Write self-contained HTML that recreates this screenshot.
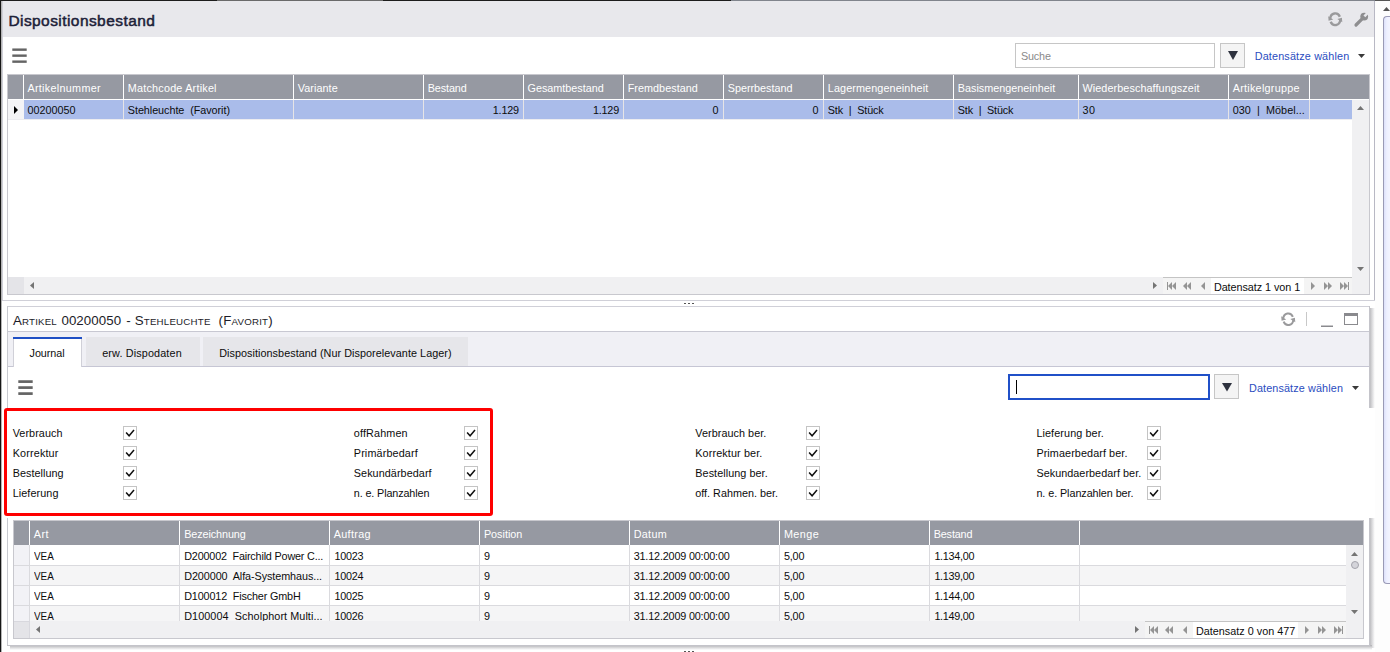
<!DOCTYPE html>
<html lang="de">
<head>
<meta charset="utf-8">
<title>Dispositionsbestand</title>
<style>
html,body{margin:0;padding:0;background:#fff;}
body{width:1390px;height:652px;position:relative;overflow:hidden;font-family:"Liberation Sans",sans-serif;font-size:10.8px;letter-spacing:0px;color:#0c0c0c;}
.a{position:absolute;}
.t{position:absolute;white-space:pre;line-height:14px;height:14px;}
svg{position:absolute;overflow:visible;}
</style>
</head>
<body>
<div class="a" style="left:0px;top:0px;width:1px;height:652px;background:#161616;"></div>
<div class="a" style="left:1px;top:0px;width:1px;height:652px;background:#b4b4b4;"></div>
<div class="a" style="left:2px;top:0px;width:1px;height:301px;background:#d0d0d8;"></div>
<div class="a" style="left:3px;top:0px;width:1372px;height:37px;background:#e8e8ec;"></div>
<div class="a" style="left:0px;top:0px;width:217px;height:1px;background:#1c1c1c;"></div>
<div class="a" style="left:217px;top:0px;width:166px;height:1px;background:#6a6a6a;"></div>
<div class="a" style="left:383px;top:0px;width:348px;height:1px;background:#1c1c1c;"></div>
<div class="a" style="left:731px;top:0px;width:644px;height:1px;background:#80848c;"></div>
<div class="a" style="left:1375px;top:0px;width:15px;height:1px;background:#555;"></div>
<div class="t" style="left:8.4px;top:9.5px;font-size:15.5px;line-height:22px;height:22px;color:#1c2138;-webkit-text-stroke:0.5px #1c2138;letter-spacing:0.431px">Dispositionsbestand</div>
<div class="a" style="left:1374px;top:1px;width:1px;height:300px;background:#b8b8c4;"></div>
<div class="a" style="left:2px;top:300px;width:1373px;height:1px;background:#d0d0d8;"></div>
<svg style="left:1327.7px;top:12px" width="14.5" height="14.5" viewBox="0 0 14.5 14.5"><g fill="none" stroke="#9a9a9c" stroke-width="2.4"><path d="M2.17 6.74A5.1 5.8 0 0 1 11.87 4.76"/><path d="M12.33 7.76A5.1 5.8 0 0 1 2.63 9.74"/></g><path d="M0.2 4.2L5.2 7.6L0.6 8.8Z" fill="#9a9a9c"/><path d="M14.3 10.3L9.3 6.9L13.9 5.7Z" fill="#9a9a9c"/></svg>
<svg style="left:1354px;top:12px" width="14.5" height="15" viewBox="0 0 14.5 15"><path d="M2 13L8.6 6.4" stroke="#8e8e90" stroke-width="3.2" stroke-linecap="round" fill="none"/><circle cx="10.2" cy="4.6" r="3.9" fill="#8e8e90"/><path d="M10.4 4.4L14.4 0.2" stroke="#e8e8ec" stroke-width="2.6" fill="none"/></svg>
<svg style="left:12px;top:48px" width="15" height="15"><g fill="#646464"><rect x="0.3" y="0.45" width="14.4" height="2.4"/><rect x="0.3" y="6.45" width="14.4" height="2.4"/><rect x="0.3" y="12.45" width="14.4" height="2.4"/></g></svg>
<div class="a" style="left:1015px;top:43px;width:198px;height:23px;border:1px solid #c6c6c6;background:#fff"></div>
<div class="t" style="left:1021.0px;top:49px;letter-spacing:-0.181px;color:#8a8a8a">Suche</div>
<div class="a" style="left:1220px;top:43px;width:23px;height:23px;border:1px solid #c6c6c6;background:#f4f4f4"></div>
<svg style="left:1227.5px;top:51px" width="10" height="9"><path d="M0 0H10L5.0 9Z" fill="#2e323e"/></svg>
<div class="t" style="left:1254.7px;top:49px;letter-spacing:0.166px;color:#2a4cc0">Datensätze wählen</div>
<svg style="left:1358px;top:54px" width="7" height="4"><path d="M0 0H7L3.5 4Z" fill="#3a3a3a"/></svg>
<div class="a" style="left:7px;top:74px;width:1363px;height:221px;background:#c8c8ce;"></div>
<div class="a" style="left:8px;top:75px;width:1361px;height:219px;background:#fff;"></div>
<div class="a" style="left:8px;top:75px;width:1361px;height:24px;background:#9699a2;"></div>
<div class="a" style="left:23px;top:75px;width:1px;height:24px;background:#fff;"></div>
<div class="a" style="left:123px;top:75px;width:1px;height:24px;background:#fff;"></div>
<div class="a" style="left:293px;top:75px;width:1px;height:24px;background:#fff;"></div>
<div class="a" style="left:423px;top:75px;width:1px;height:24px;background:#fff;"></div>
<div class="a" style="left:523px;top:75px;width:1px;height:24px;background:#fff;"></div>
<div class="a" style="left:623px;top:75px;width:1px;height:24px;background:#fff;"></div>
<div class="a" style="left:723px;top:75px;width:1px;height:24px;background:#fff;"></div>
<div class="a" style="left:823px;top:75px;width:1px;height:24px;background:#fff;"></div>
<div class="a" style="left:953px;top:75px;width:1px;height:24px;background:#fff;"></div>
<div class="a" style="left:1078px;top:75px;width:1px;height:24px;background:#fff;"></div>
<div class="a" style="left:1228px;top:75px;width:1px;height:24px;background:#fff;"></div>
<div class="a" style="left:1309px;top:75px;width:1px;height:24px;background:#fff;"></div>
<div class="t" style="left:27.4px;top:81px;letter-spacing:0.299px;color:#fff">Artikelnummer</div>
<div class="t" style="left:127.8px;top:81px;letter-spacing:0.218px;color:#fff">Matchcode Artikel</div>
<div class="t" style="left:297.8px;top:81px;letter-spacing:0.068px;color:#fff">Variante</div>
<div class="t" style="left:427.7px;top:81px;letter-spacing:-0.104px;color:#fff">Bestand</div>
<div class="t" style="left:527.6px;top:81px;letter-spacing:-0.011px;color:#fff">Gesamtbestand</div>
<div class="t" style="left:627.7px;top:81px;letter-spacing:0.043px;color:#fff">Fremdbestand</div>
<div class="t" style="left:727.7px;top:81px;letter-spacing:-0.003px;color:#fff">Sperrbestand</div>
<div class="t" style="left:827.8px;top:81px;letter-spacing:0.115px;color:#fff">Lagermengeneinheit</div>
<div class="t" style="left:957.8px;top:81px;letter-spacing:0.009px;color:#fff">Basismengeneinheit</div>
<div class="t" style="left:1082.5px;top:81px;letter-spacing:0.088px;color:#fff">Wiederbeschaffungszeit</div>
<div class="t" style="left:1232.7px;top:81px;letter-spacing:0.265px;color:#fff">Artikelgruppe</div>
<div class="a" style="left:8px;top:100px;width:16px;height:19px;background:#f4f4f6;"></div>
<div class="a" style="left:24px;top:100px;width:1328px;height:19px;background:#aabcea;"></div>
<div class="a" style="left:123px;top:100px;width:1px;height:19px;background:#e6e4e6;"></div>
<div class="a" style="left:293px;top:100px;width:1px;height:19px;background:#e6e4e6;"></div>
<div class="a" style="left:423px;top:100px;width:1px;height:19px;background:#e6e4e6;"></div>
<div class="a" style="left:523px;top:100px;width:1px;height:19px;background:#e6e4e6;"></div>
<div class="a" style="left:623px;top:100px;width:1px;height:19px;background:#e6e4e6;"></div>
<div class="a" style="left:723px;top:100px;width:1px;height:19px;background:#e6e4e6;"></div>
<div class="a" style="left:823px;top:100px;width:1px;height:19px;background:#e6e4e6;"></div>
<div class="a" style="left:953px;top:100px;width:1px;height:19px;background:#e6e4e6;"></div>
<div class="a" style="left:1078px;top:100px;width:1px;height:19px;background:#e6e4e6;"></div>
<div class="a" style="left:1228px;top:100px;width:1px;height:19px;background:#e6e4e6;"></div>
<div class="a" style="left:1309px;top:100px;width:1px;height:19px;background:#e6e4e6;"></div>
<div class="a" style="left:8px;top:119px;width:1344px;height:1px;background:#ececf0;"></div>
<svg style="left:14px;top:106px" width="4" height="8"><path d="M0 0V8L4 4.0Z" fill="#000"/></svg>
<div class="t" style="left:27.4px;top:103px;letter-spacing:0.008px;">00200050</div>
<div class="t" style="left:127.8px;top:103px;letter-spacing:-0.049px;">Stehleuchte  (Favorit)</div>
<div class="t" style="left:492.8px;top:103px;letter-spacing:-0.183px;">1.129</div>
<div class="t" style="left:592.9px;top:103px;letter-spacing:-0.183px;">1.129</div>
<div class="t" style="left:712.4px;top:103px;letter-spacing:1.184px;">0</div>
<div class="t" style="left:812.4px;top:103px;letter-spacing:1.184px;">0</div>
<div class="t" style="left:827.8px;top:103px;letter-spacing:-0.126px;">Stk  |  Stück</div>
<div class="t" style="left:957.8px;top:103px;letter-spacing:-0.151px;">Stk  |  Stück</div>
<div class="t" style="left:1082.5px;top:103px;letter-spacing:0.484px;">30</div>
<div class="t" style="left:1232.7px;top:103px;letter-spacing:0.058px;">030  |  Möbel...</div>
<div class="a" style="left:1352px;top:100px;width:17px;height:177px;background:#f0f0f2;"></div>
<svg style="left:1357px;top:106px" width="7" height="4"><path d="M0 4H7L3.5 0Z" fill="#747474"/></svg>
<svg style="left:1357px;top:267px" width="7" height="4"><path d="M0 0H7L3.5 4Z" fill="#747474"/></svg>
<div class="a" style="left:8px;top:277px;width:1361px;height:17px;background:#f0f0f2;"></div>
<div class="a" style="left:8px;top:277px;width:16px;height:17px;background:#e4e4e8;"></div>
<svg style="left:30px;top:282px" width="4" height="7"><path d="M4 0V7L0 3.5Z" fill="#747474"/></svg>
<svg style="left:1153px;top:282px" width="4" height="7"><path d="M0 0V7L4 3.5Z" fill="#747474"/></svg>
<div class="a" style="left:1163px;top:277px;width:189px;height:17px;background:#f4f4f4;"></div>
<div class="a" style="left:1163px;top:277px;width:189px;height:1px;background:#c4c4c4;"></div>
<div class="a" style="left:1211px;top:278px;width:93px;height:16px;background:#fff;"></div>
<div class="t" style="left:1213.9px;top:280px;letter-spacing:-0.046px;">Datensatz 1 von 1</div>
<div class="a" style="left:1167px;top:282px;width:1px;height:8px;background:#949494;"></div>
<svg style="left:1168px;top:282px" width="4" height="8"><path d="M4 0V8L0 4.0Z" fill="#949494"/></svg>
<svg style="left:1172px;top:282px" width="4" height="8"><path d="M4 0V8L0 4.0Z" fill="#949494"/></svg>
<svg style="left:1183px;top:282px" width="4" height="8"><path d="M4 0V8L0 4.0Z" fill="#949494"/></svg>
<svg style="left:1187px;top:282px" width="4" height="8"><path d="M4 0V8L0 4.0Z" fill="#949494"/></svg>
<svg style="left:1201px;top:282px" width="4" height="8"><path d="M4 0V8L0 4.0Z" fill="#949494"/></svg>
<svg style="left:1311px;top:282px" width="4" height="8"><path d="M0 0V8L4 4.0Z" fill="#949494"/></svg>
<svg style="left:1324px;top:282px" width="4" height="8"><path d="M0 0V8L4 4.0Z" fill="#949494"/></svg>
<svg style="left:1328px;top:282px" width="4" height="8"><path d="M0 0V8L4 4.0Z" fill="#949494"/></svg>
<svg style="left:1340px;top:282px" width="4" height="8"><path d="M0 0V8L4 4.0Z" fill="#949494"/></svg>
<svg style="left:1344px;top:282px" width="4" height="8"><path d="M0 0V8L4 4.0Z" fill="#949494"/></svg>
<div class="a" style="left:1348px;top:282px;width:1px;height:8px;background:#949494;"></div>
<div class="a" style="left:684px;top:303px;width:2px;height:1px;background:#555;"></div>
<div class="a" style="left:688px;top:303px;width:2px;height:1px;background:#555;"></div>
<div class="a" style="left:692px;top:303px;width:2px;height:1px;background:#555;"></div>
<div class="a" style="left:684px;top:651px;width:2px;height:1px;background:#555;"></div>
<div class="a" style="left:688px;top:651px;width:2px;height:1px;background:#555;"></div>
<div class="a" style="left:692px;top:651px;width:2px;height:1px;background:#555;"></div>
<div class="a" style="left:1369px;top:308px;width:6px;height:100px;background:linear-gradient(to right,#b0b0b4,#dcdcde 55%,#fff)"></div>
<div class="a" style="left:1369px;top:518px;width:6px;height:130px;background:linear-gradient(to right,#b0b0b4,#dcdcde 55%,#fff)"></div>
<div class="a" style="left:10px;top:645px;width:1362px;height:5px;background:linear-gradient(to bottom,#b0b0b4,#dcdcde 55%,#fff)"></div>
<div class="a" style="left:7px;top:306px;width:1363px;height:1px;background:#d0d0d8;"></div>
<div class="a" style="left:7px;top:306px;width:1px;height:102px;background:#c8cad0;"></div>
<div class="a" style="left:7px;top:518px;width:1px;height:128px;background:#c8cad0;"></div>
<div class="a" style="left:1369px;top:306px;width:1px;height:102px;background:#c4c4ca;"></div>
<div class="a" style="left:1369px;top:518px;width:1px;height:128px;background:#c4c4ca;"></div>
<div class="a" style="left:7px;top:645px;width:1363px;height:1px;background:#c4c4ca;"></div>
<div class="a" style="left:8px;top:307px;width:1361px;height:24px;background:#fff;"></div>
<div class="t" style="left:13.0px;top:312px;line-height:18px;height:18px;color:#1c1c28;letter-spacing:0.179px"><span style="font-size:13.3px">A</span><span style="font-size:9.7px">RTIKEL</span></div>
<div class="t" style="left:61.4px;top:312px;line-height:18px;height:18px;color:#1c1c28;letter-spacing:0.09px"><span style="font-size:13.3px">00200050</span></div>
<div class="t" style="left:126.3px;top:312px;line-height:18px;height:18px;color:#1c1c28;letter-spacing:0.162px"><span style="font-size:13.3px">-</span></div>
<div class="t" style="left:134.7px;top:312px;line-height:18px;height:18px;color:#1c1c28;letter-spacing:0.223px"><span style="font-size:13.3px">S</span><span style="font-size:9.7px">TEHLEUCHTE</span></div>
<div class="t" style="left:218.5px;top:312px;line-height:18px;height:18px;color:#1c1c28;letter-spacing:0.232px"><span style="font-size:13.3px">(F</span><span style="font-size:9.7px">AVORIT</span><span style="font-size:13.3px">)</span></div>
<div class="a" style="left:8px;top:331px;width:1361px;height:1px;background:#c8c8d2;"></div>
<svg style="left:1281px;top:311.8px" width="14.5" height="14.5" viewBox="0 0 14.5 14.5"><g fill="none" stroke="#9a9a9c" stroke-width="2.0"><path d="M2.17 6.74A5.1 5.8 0 0 1 11.87 4.76"/><path d="M12.33 7.76A5.1 5.8 0 0 1 2.63 9.74"/></g><path d="M0.2 4.2L5.2 7.6L0.6 8.8Z" fill="#9a9a9c"/><path d="M14.3 10.3L9.3 6.9L13.9 5.7Z" fill="#9a9a9c"/></svg>
<div class="a" style="left:1306px;top:312px;width:1px;height:14px;background:#c8c8c8;"></div>
<div class="a" style="left:1321px;top:325px;width:12px;height:1px;background:#c6c6c8;"></div>
<div class="a" style="left:1321px;top:326px;width:12px;height:1px;background:#8a8a8e;"></div>
<div class="a" style="left:1344px;top:313px;width:12px;height:8px;border:1px solid #8a8a8e;border-top-width:3px;background:#fff"></div>
<div class="a" style="left:8px;top:332px;width:1361px;height:34px;background:#f0f0f5;"></div>
<div class="a" style="left:8px;top:366px;width:1361px;height:1px;background:#c6c6d4;"></div>
<div class="a" style="left:86px;top:337px;width:114px;height:29px;background:#e6e6ea;"></div>
<div class="a" style="left:203px;top:337px;width:265px;height:29px;background:#e6e6ea;"></div>
<div class="a" style="left:13px;top:337px;width:69px;height:30px;background:#d0d0d8;"></div>
<div class="a" style="left:14px;top:339px;width:67px;height:28px;background:#fff;"></div>
<div class="a" style="left:13px;top:337px;width:69px;height:2px;background:#1f4fc4;"></div>
<div class="t" style="left:29.6px;top:346px;letter-spacing:-0.07px;">Journal</div>
<div class="t" style="left:102.2px;top:346px;letter-spacing:0.147px;">erw. Dispodaten</div>
<div class="t" style="left:219.2px;top:346px;letter-spacing:0.056px;">Dispositionsbestand (Nur Disporelevante Lager)</div>
<svg style="left:18.1px;top:380px" width="15" height="15"><g fill="#646464"><rect x="0.3" y="0.25" width="14.4" height="2.7"/><rect x="0.3" y="6.25" width="14.4" height="2.7"/><rect x="0.3" y="12.25" width="14.4" height="2.7"/></g></svg>
<div class="a" style="left:1008px;top:374px;width:198px;height:22px;border:2px solid #2050c8;background:#fff"></div>
<div class="a" style="left:1016px;top:380px;width:1px;height:14px;background:#000;"></div>
<div class="a" style="left:1214px;top:374px;width:23px;height:23px;border:1px solid #c6c6c6;background:#f4f4f4"></div>
<svg style="left:1221.5px;top:383px" width="10" height="8.5"><path d="M0 0H10L5.0 8.5Z" fill="#2e323e"/></svg>
<div class="t" style="left:1249.0px;top:381px;letter-spacing:0.129px;color:#2a4cc0">Datensätze wählen</div>
<svg style="left:1352px;top:386px" width="7" height="4"><path d="M0 0H7L3.5 4Z" fill="#3a3a3a"/></svg>
<div class="t" style="left:12.7px;top:426px;letter-spacing:0.073px;">Verbrauch</div>
<div class="a" style="left:123px;top:426px;width:12px;height:12px;border:1px solid #c4c4c4;background:#fff"></div>
<svg style="left:123px;top:426px" width="14" height="14"><path d="M3.1 6.5L6.1 9.8L11 4" fill="none" stroke="#111" stroke-width="1.5"/></svg>
<div class="t" style="left:12.7px;top:446px;letter-spacing:0.162px;">Korrektur</div>
<div class="a" style="left:123px;top:446px;width:12px;height:12px;border:1px solid #c4c4c4;background:#fff"></div>
<svg style="left:123px;top:446px" width="14" height="14"><path d="M3.1 6.5L6.1 9.8L11 4" fill="none" stroke="#111" stroke-width="1.5"/></svg>
<div class="t" style="left:12.7px;top:466px;letter-spacing:0.053px;">Bestellung</div>
<div class="a" style="left:123px;top:466px;width:12px;height:12px;border:1px solid #c4c4c4;background:#fff"></div>
<svg style="left:123px;top:466px" width="14" height="14"><path d="M3.1 6.5L6.1 9.8L11 4" fill="none" stroke="#111" stroke-width="1.5"/></svg>
<div class="t" style="left:12.7px;top:486px;letter-spacing:0.084px;">Lieferung</div>
<div class="a" style="left:123px;top:486px;width:12px;height:12px;border:1px solid #c4c4c4;background:#fff"></div>
<svg style="left:123px;top:486px" width="14" height="14"><path d="M3.1 6.5L6.1 9.8L11 4" fill="none" stroke="#111" stroke-width="1.5"/></svg>
<div class="t" style="left:353.8px;top:426px;letter-spacing:0.147px;">offRahmen</div>
<div class="a" style="left:464px;top:426px;width:12px;height:12px;border:1px solid #c4c4c4;background:#fff"></div>
<svg style="left:464px;top:426px" width="14" height="14"><path d="M3.1 6.5L6.1 9.8L11 4" fill="none" stroke="#111" stroke-width="1.5"/></svg>
<div class="t" style="left:353.8px;top:446px;letter-spacing:0.136px;">Primärbedarf</div>
<div class="a" style="left:464px;top:446px;width:12px;height:12px;border:1px solid #c4c4c4;background:#fff"></div>
<svg style="left:464px;top:446px" width="14" height="14"><path d="M3.1 6.5L6.1 9.8L11 4" fill="none" stroke="#111" stroke-width="1.5"/></svg>
<div class="t" style="left:353.8px;top:466px;letter-spacing:0.074px;">Sekundärbedarf</div>
<div class="a" style="left:464px;top:466px;width:12px;height:12px;border:1px solid #c4c4c4;background:#fff"></div>
<svg style="left:464px;top:466px" width="14" height="14"><path d="M3.1 6.5L6.1 9.8L11 4" fill="none" stroke="#111" stroke-width="1.5"/></svg>
<div class="t" style="left:353.8px;top:486px;letter-spacing:-0.122px;">n. e. Planzahlen</div>
<div class="a" style="left:464px;top:486px;width:12px;height:12px;border:1px solid #c4c4c4;background:#fff"></div>
<svg style="left:464px;top:486px" width="14" height="14"><path d="M3.1 6.5L6.1 9.8L11 4" fill="none" stroke="#111" stroke-width="1.5"/></svg>
<div class="t" style="left:695.3px;top:426px;letter-spacing:0.059px;">Verbrauch ber.</div>
<div class="a" style="left:806px;top:426px;width:12px;height:12px;border:1px solid #c4c4c4;background:#fff"></div>
<svg style="left:806px;top:426px" width="14" height="14"><path d="M3.1 6.5L6.1 9.8L11 4" fill="none" stroke="#111" stroke-width="1.5"/></svg>
<div class="t" style="left:695.3px;top:446px;letter-spacing:0.121px;">Korrektur ber.</div>
<div class="a" style="left:806px;top:446px;width:12px;height:12px;border:1px solid #c4c4c4;background:#fff"></div>
<svg style="left:806px;top:446px" width="14" height="14"><path d="M3.1 6.5L6.1 9.8L11 4" fill="none" stroke="#111" stroke-width="1.5"/></svg>
<div class="t" style="left:695.3px;top:466px;letter-spacing:0.069px;">Bestellung ber.</div>
<div class="a" style="left:806px;top:466px;width:12px;height:12px;border:1px solid #c4c4c4;background:#fff"></div>
<svg style="left:806px;top:466px" width="14" height="14"><path d="M3.1 6.5L6.1 9.8L11 4" fill="none" stroke="#111" stroke-width="1.5"/></svg>
<div class="t" style="left:695.3px;top:486px;letter-spacing:-0.003px;">off. Rahmen. ber.</div>
<div class="a" style="left:806px;top:486px;width:12px;height:12px;border:1px solid #c4c4c4;background:#fff"></div>
<svg style="left:806px;top:486px" width="14" height="14"><path d="M3.1 6.5L6.1 9.8L11 4" fill="none" stroke="#111" stroke-width="1.5"/></svg>
<div class="t" style="left:1036.4px;top:426px;letter-spacing:0.105px;">Lieferung ber.</div>
<div class="a" style="left:1147px;top:426px;width:12px;height:12px;border:1px solid #c4c4c4;background:#fff"></div>
<svg style="left:1147px;top:426px" width="14" height="14"><path d="M3.1 6.5L6.1 9.8L11 4" fill="none" stroke="#111" stroke-width="1.5"/></svg>
<div class="t" style="left:1036.4px;top:446px;letter-spacing:0.093px;">Primaerbedarf ber.</div>
<div class="a" style="left:1147px;top:446px;width:12px;height:12px;border:1px solid #c4c4c4;background:#fff"></div>
<svg style="left:1147px;top:446px" width="14" height="14"><path d="M3.1 6.5L6.1 9.8L11 4" fill="none" stroke="#111" stroke-width="1.5"/></svg>
<div class="t" style="left:1036.4px;top:466px;letter-spacing:0.05px;">Sekundaerbedarf ber.</div>
<div class="a" style="left:1147px;top:466px;width:12px;height:12px;border:1px solid #c4c4c4;background:#fff"></div>
<svg style="left:1147px;top:466px" width="14" height="14"><path d="M3.1 6.5L6.1 9.8L11 4" fill="none" stroke="#111" stroke-width="1.5"/></svg>
<div class="t" style="left:1036.4px;top:486px;letter-spacing:-0.068px;">n. e. Planzahlen ber.</div>
<div class="a" style="left:1147px;top:486px;width:12px;height:12px;border:1px solid #c4c4c4;background:#fff"></div>
<svg style="left:1147px;top:486px" width="14" height="14"><path d="M3.1 6.5L6.1 9.8L11 4" fill="none" stroke="#111" stroke-width="1.5"/></svg>
<div class="a" style="left:4px;top:408px;width:483px;height:102px;border:3px solid #fe0000;border-radius:3px"></div>
<div class="a" style="left:13px;top:520px;width:1351px;height:119px;background:#c8c8ce;"></div>
<div class="a" style="left:14px;top:521px;width:1349px;height:117px;background:#fff;"></div>
<div class="a" style="left:14px;top:521px;width:1349px;height:24px;background:#9699a2;"></div>
<div class="a" style="left:29px;top:521px;width:1px;height:24px;background:#fff;"></div>
<div class="a" style="left:179px;top:521px;width:1px;height:24px;background:#fff;"></div>
<div class="a" style="left:329px;top:521px;width:1px;height:24px;background:#fff;"></div>
<div class="a" style="left:479px;top:521px;width:1px;height:24px;background:#fff;"></div>
<div class="a" style="left:629px;top:521px;width:1px;height:24px;background:#fff;"></div>
<div class="a" style="left:779px;top:521px;width:1px;height:24px;background:#fff;"></div>
<div class="a" style="left:929px;top:521px;width:1px;height:24px;background:#fff;"></div>
<div class="a" style="left:1079px;top:521px;width:1px;height:24px;background:#fff;"></div>
<div class="t" style="left:33.7px;top:527px;letter-spacing:0.502px;color:#fff">Art</div>
<div class="t" style="left:184.2px;top:527px;letter-spacing:-0.084px;color:#fff">Bezeichnung</div>
<div class="t" style="left:333.7px;top:527px;letter-spacing:0.331px;color:#fff">Auftrag</div>
<div class="t" style="left:483.9px;top:527px;letter-spacing:0.011px;color:#fff">Position</div>
<div class="t" style="left:633.7px;top:527px;letter-spacing:0.297px;color:#fff">Datum</div>
<div class="t" style="left:783.9px;top:527px;letter-spacing:0.446px;color:#fff">Menge</div>
<div class="t" style="left:933.7px;top:527px;letter-spacing:-0.137px;color:#fff">Bestand</div>
<div class="a" style="left:14px;top:545px;width:1332px;height:76px;overflow:hidden">
<div class="a" style="left:0;top:0px;width:1332px;height:20px;background:#fff"></div>
<div class="a" style="left:0;top:0px;width:15px;height:20px;background:#f2f2f6"></div>
<div class="a" style="left:0;top:20px;width:1332px;height:20px;background:#f5f5f6"></div>
<div class="a" style="left:0;top:20px;width:15px;height:20px;background:#f2f2f6"></div>
<div class="a" style="left:0;top:40px;width:1332px;height:20px;background:#fff"></div>
<div class="a" style="left:0;top:40px;width:15px;height:20px;background:#f2f2f6"></div>
<div class="a" style="left:0;top:60px;width:1332px;height:20px;background:#f5f5f6"></div>
<div class="a" style="left:0;top:60px;width:15px;height:20px;background:#f2f2f6"></div>
<div class="a" style="left:0;top:20px;width:1332px;height:1px;background:#dadade"></div>
<div class="t" style="left:20.0px;top:4px;letter-spacing:0;transform:scaleX(0.9163);transform-origin:0 50%;">VEA</div>
<div class="t" style="left:170.2px;top:4px;letter-spacing:-0.173px;">D200002  Fairchild Power C...</div>
<div class="t" style="left:320.4px;top:4px;letter-spacing:-0.233px;">10023</div>
<div class="t" style="left:469.9px;top:4px;letter-spacing:0.784px;">9</div>
<div class="t" style="left:619.7px;top:4px;letter-spacing:-0.165px;">31.12.2009 00:00:00</div>
<div class="t" style="left:769.9px;top:4px;letter-spacing:-0.172px;">5,00</div>
<div class="t" style="left:920.4px;top:4px;letter-spacing:-0.276px;">1.134,00</div>
<div class="a" style="left:0;top:40px;width:1332px;height:1px;background:#dadade"></div>
<div class="t" style="left:20.0px;top:24px;letter-spacing:0;transform:scaleX(0.9163);transform-origin:0 50%;">VEA</div>
<div class="t" style="left:170.2px;top:24px;letter-spacing:-0.075px;">D200000  Alfa-Systemhaus...</div>
<div class="t" style="left:320.4px;top:24px;letter-spacing:-0.233px;">10024</div>
<div class="t" style="left:469.9px;top:24px;letter-spacing:0.784px;">9</div>
<div class="t" style="left:619.7px;top:24px;letter-spacing:-0.165px;">31.12.2009 00:00:00</div>
<div class="t" style="left:769.9px;top:24px;letter-spacing:-0.172px;">5,00</div>
<div class="t" style="left:920.4px;top:24px;letter-spacing:-0.276px;">1.139,00</div>
<div class="a" style="left:0;top:60px;width:1332px;height:1px;background:#dadade"></div>
<div class="t" style="left:20.0px;top:44px;letter-spacing:0;transform:scaleX(0.9163);transform-origin:0 50%;">VEA</div>
<div class="t" style="left:170.2px;top:44px;letter-spacing:-0.141px;">D100012  Fischer GmbH</div>
<div class="t" style="left:320.4px;top:44px;letter-spacing:-0.233px;">10025</div>
<div class="t" style="left:469.9px;top:44px;letter-spacing:0.784px;">9</div>
<div class="t" style="left:619.7px;top:44px;letter-spacing:-0.165px;">31.12.2009 00:00:00</div>
<div class="t" style="left:769.9px;top:44px;letter-spacing:-0.172px;">5,00</div>
<div class="t" style="left:920.4px;top:44px;letter-spacing:-0.276px;">1.144,00</div>
<div class="a" style="left:0;top:80px;width:1332px;height:1px;background:#dadade"></div>
<div class="t" style="left:20.0px;top:64px;letter-spacing:0;transform:scaleX(0.9163);transform-origin:0 50%;">VEA</div>
<div class="t" style="left:170.2px;top:64px;letter-spacing:0.08px;">D100004  Scholphort Multi...</div>
<div class="t" style="left:320.4px;top:64px;letter-spacing:-0.233px;">10026</div>
<div class="t" style="left:469.9px;top:64px;letter-spacing:0.784px;">9</div>
<div class="t" style="left:619.7px;top:64px;letter-spacing:-0.165px;">31.12.2009 00:00:00</div>
<div class="t" style="left:769.9px;top:64px;letter-spacing:-0.172px;">5,00</div>
<div class="t" style="left:920.4px;top:64px;letter-spacing:-0.276px;">1.149,00</div>
<div class="a" style="left:15px;top:0;width:1px;height:76px;background:#dadade"></div>
<div class="a" style="left:165px;top:0;width:1px;height:76px;background:#dadade"></div>
<div class="a" style="left:315px;top:0;width:1px;height:76px;background:#dadade"></div>
<div class="a" style="left:465px;top:0;width:1px;height:76px;background:#dadade"></div>
<div class="a" style="left:615px;top:0;width:1px;height:76px;background:#dadade"></div>
<div class="a" style="left:765px;top:0;width:1px;height:76px;background:#dadade"></div>
<div class="a" style="left:915px;top:0;width:1px;height:76px;background:#dadade"></div>
<div class="a" style="left:1065px;top:0;width:1px;height:76px;background:#dadade"></div>
</div>
<div class="a" style="left:1346px;top:545px;width:17px;height:76px;background:#f0f0f2;"></div>
<svg style="left:1351px;top:552px" width="7" height="4"><path d="M0 4H7L3.5 0Z" fill="#747474"/></svg>
<svg style="left:1351px;top:610px" width="7" height="4"><path d="M0 0H7L3.5 4Z" fill="#747474"/></svg>
<div class="a" style="left:1351px;top:561px;width:6px;height:6px;border-radius:50%;border:1px solid #a4a4ac;background:#d4d4da"></div>
<div class="a" style="left:14px;top:621px;width:1349px;height:17px;background:#f0f0f2;"></div>
<div class="a" style="left:14px;top:621px;width:15px;height:17px;background:#e4e4e8;"></div>
<div class="a" style="left:14px;top:621px;width:15px;height:1px;background:#d8d8de;"></div>
<div class="a" style="left:29px;top:621px;width:1px;height:17px;background:#d8d8de;"></div>
<svg style="left:36px;top:626px" width="4" height="7"><path d="M4 0V7L0 3.5Z" fill="#747474"/></svg>
<svg style="left:1135px;top:626px" width="4" height="7"><path d="M0 0V7L4 3.5Z" fill="#747474"/></svg>
<div class="a" style="left:1145px;top:621px;width:201px;height:17px;background:#f4f4f4;"></div>
<div class="a" style="left:1145px;top:621px;width:201px;height:1px;background:#c4c4c4;"></div>
<div class="a" style="left:1193px;top:622px;width:105px;height:16px;background:#fff;"></div>
<div class="t" style="left:1196.0px;top:624px;letter-spacing:0.009px;">Datensatz 0 von 477</div>
<div class="a" style="left:1149px;top:626px;width:1px;height:8px;background:#949494;"></div>
<svg style="left:1150px;top:626px" width="4" height="8"><path d="M4 0V8L0 4.0Z" fill="#949494"/></svg>
<svg style="left:1154px;top:626px" width="4" height="8"><path d="M4 0V8L0 4.0Z" fill="#949494"/></svg>
<svg style="left:1165px;top:626px" width="4" height="8"><path d="M4 0V8L0 4.0Z" fill="#949494"/></svg>
<svg style="left:1169px;top:626px" width="4" height="8"><path d="M4 0V8L0 4.0Z" fill="#949494"/></svg>
<svg style="left:1183px;top:626px" width="4" height="8"><path d="M4 0V8L0 4.0Z" fill="#949494"/></svg>
<svg style="left:1305px;top:626px" width="4" height="8"><path d="M0 0V8L4 4.0Z" fill="#949494"/></svg>
<svg style="left:1318px;top:626px" width="4" height="8"><path d="M0 0V8L4 4.0Z" fill="#949494"/></svg>
<svg style="left:1322px;top:626px" width="4" height="8"><path d="M0 0V8L4 4.0Z" fill="#949494"/></svg>
<svg style="left:1334px;top:626px" width="4" height="8"><path d="M0 0V8L4 4.0Z" fill="#949494"/></svg>
<svg style="left:1338px;top:626px" width="4" height="8"><path d="M0 0V8L4 4.0Z" fill="#949494"/></svg>
<div class="a" style="left:1342px;top:626px;width:1px;height:8px;background:#949494;"></div>
<div class="a" style="left:1375px;top:1px;width:15px;height:651px;background:#fdfdfd;"></div>
<svg style="left:1383px;top:7px" width="7" height="4"><path d="M0 4H7L3.5 0Z" fill="#555"/></svg>
<div class="a" style="left:1383px;top:16px;width:7px;height:566px;border:1px solid #9a9ab6;border-right:none;border-radius:4px 0 0 4px;background:linear-gradient(to right,#dde1fa,#eef0ff 40%,#f4f5ff)"></div>
</body>
</html>
